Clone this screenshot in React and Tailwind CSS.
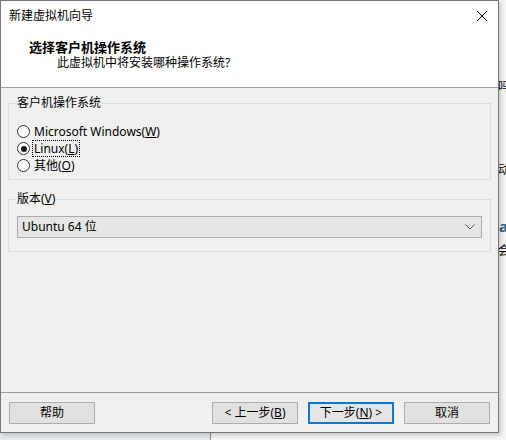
import React from "react";

const FONT = { fontFamily: '"Noto Sans", "Noto Sans CJK SC", sans-serif' };

function Radio({ checked, children, focused }) {
  return (
    <label className="flex items-center h-[17px] gap-[3px]">
      <span className="w-[13px] h-[13px] rounded-full border border-[#333333] bg-white flex items-center justify-center">
        {checked && <span className="w-[6px] h-[6px] rounded-full bg-[#1a1a1a]" />}
      </span>
      <span className={focused ? "outline outline-1 outline-dotted outline-[#000] px-[1px] leading-[15px]" : "px-[1px] leading-[15px]"}>
        {children}
      </span>
    </label>
  );
}

function Btn({ children, primary }) {
  return (
    <button
      className={
        "w-[86px] h-[22px] flex items-center justify-center text-[12px] text-black " +
        (primary
          ? "border-2 border-[#0078d7] bg-[#e5e5e5]"
          : "border border-[#adadad] bg-[#e1e1e1]")
      }
    >
      {children}
    </button>
  );
}

export default function App() {
  return (
    <div className="relative w-[506px] h-[440px] overflow-hidden bg-[#f0f0f0] text-black" style={FONT}>
      {/* window behind, peeking out on the right */}
      <div className="absolute left-[494px] top-0 w-[40px] h-[440px] bg-[#f4f4f4] text-[12px] leading-none">
        <div className="absolute left-[4px] top-[81px]">吗</div>
        <div className="absolute left-[4px] top-[164px]">动</div>
        <div className="absolute left-[5px] top-[219px] text-[15px] font-bold text-[#2e5d8e]">a</div>
        <div className="absolute left-[4px] top-[245px]">会</div>
      </div>
      {/* strip below the dialog */}
      <div className="absolute left-0 top-[433px] w-[506px] h-[7px] flex">
        <div className="w-[210px] h-full bg-[#e4e7ee]" />
        <div className="w-[1px] h-full bg-[#8a8a8a]" />
        <div className="flex-1 h-full bg-[#f4f4f4]" />
      </div>

      {/* dialog window */}
      <div className="relative w-[499px] h-[433px] border border-[#767676] bg-[#f0f0f0] flex flex-col shadow-[2px_2px_4px_rgba(0,0,0,0.18)]">
        {/* title bar + header */}
        <div className="bg-white border-b border-[#a0a0a0]">
          <div className="h-[29px] flex items-center justify-between pl-[8px] pr-[9px]">
            <span className="text-[12px]">新建虚拟机向导</span>
            <svg width="12" height="12" viewBox="0 0 12 12" className="mr-[1px]">
              <path d="M1 1 L11 11 M11 1 L1 11" stroke="#000" strokeWidth="1" fill="none" />
            </svg>
          </div>
          <div className="h-[57px] pl-[28px] pt-[9px]">
            <div className="text-[13px] font-bold leading-[16px]">选择客户机操作系统</div>
            <div className="text-[12px] leading-[16px] pl-[28px]">此虚拟机中将安装哪种操作系统?</div>
          </div>
        </div>

        {/* body */}
        <div className="flex-1 px-[7px] pt-[7px] text-[12px]">
          <fieldset className="border border-[#dcdcdc] px-[8px] pt-[12px] pb-[8px] h-[85px]">
            <legend className="px-[1px] -ml-[1px] leading-[16px]">客户机操作系统</legend>
            <div className="flex flex-col">
              <Radio>
                Microsoft Windows(<u>W</u>)
              </Radio>
              <Radio checked focused>
                Linux(<u>L</u>)
              </Radio>
              <Radio>
                其他(<u>O</u>)
              </Radio>
            </div>
          </fieldset>

          <fieldset className="mt-[11px] border border-[#dcdcdc] px-[8px] pt-[9px] pb-[13px]">
            <legend className="px-[1px] -ml-[1px] leading-[16px]">
              版本(<u>V</u>)
            </legend>
            <div className="h-[22px] border border-[#adadad] bg-[#e5e5e5] flex items-center justify-between pl-[4px] pr-[6px]">
              <span>Ubuntu 64 位</span>
              <svg width="10" height="6" viewBox="0 0 10 6">
                <path d="M0.5 0.5 L5 5 L9.5 0.5" stroke="#555" strokeWidth="1" fill="none" />
              </svg>
            </div>
          </fieldset>
        </div>

        {/* footer */}
        <div className="border-t border-[#a0a0a0] h-[40px] pt-[9px] px-[8px] flex justify-between">
          <Btn>帮助</Btn>
          <div className="flex gap-[10px]">
            <Btn>
              &lt; 上一步(<u>B</u>)
            </Btn>
            <Btn primary>
              下一步(<u>N</u>) &gt;
            </Btn>
            <Btn>取消</Btn>
          </div>
        </div>
      </div>
    </div>
  );
}
